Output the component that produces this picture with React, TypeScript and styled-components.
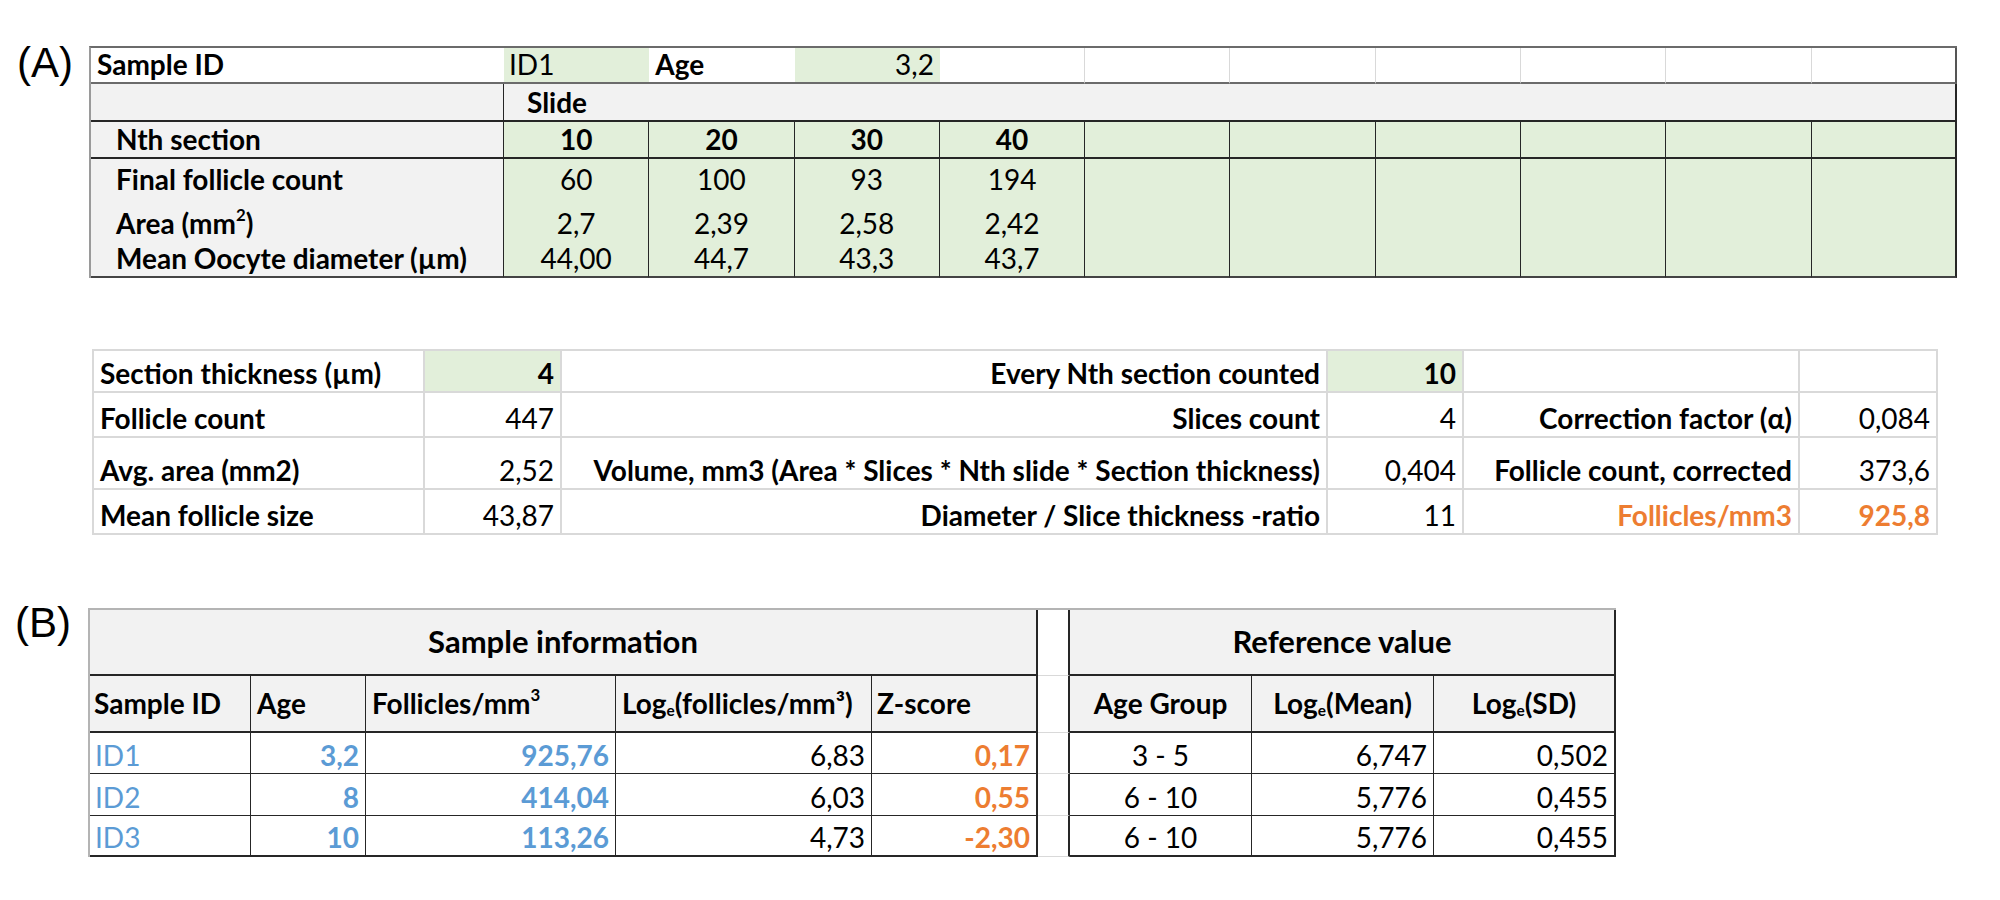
import React from "react";
import styled, { createGlobalStyle } from "styled-components";

const GREEN = "#e2efda";
const GREY = "#f2f2f2";
const BLUE = "#5b9bd5";
const ORANGE = "#ed7d31";
const DARK = "#262626";
const GRID = "#d9d9d9";

const GlobalStyle = createGlobalStyle`
  html, body {
    margin: 0;
    padding: 0;
    background: #fff;
  }
  body {
    font-family: Lato, "Liberation Sans", sans-serif;
    color: #000;
  }
`;

const Page = styled.div`
  width: 2000px;
  height: 900px;
  overflow: hidden;
  box-sizing: border-box;
  padding-top: 40px;
  display: flex;
  flex-direction: column;
`;

const Panel = styled.section<{ $top?: number }>`
  display: flex;
  align-items: flex-start;
  margin-top: ${(p) => p.$top ?? 0}px;
`;

const PanelLabel = styled.div<{ $left?: number }>`
  width: 88px;
  flex: none;
  box-sizing: border-box;
  padding-left: ${(p) => p.$left ?? 16}px;
  font-family: "Liberation Sans", Arial, sans-serif;
  font-size: 42px;
  line-height: 46px;
`;

const SheetA = styled.div`
  display: grid;
  grid-template-columns: 413px repeat(10, 145.3px);
  grid-template-rows: 36px 38px 37px 38px 44px 37px;
  margin: 6px 0 0 1px;
  border-top: 2px solid #6b6b6b;
  border-left: 2px solid #9a9a9a;
  font-size: 28px;
`;

const SheetSummary = styled.div`
  display: grid;
  grid-template-columns: 331px 137px 766px 136px 336px 138px;
  grid-template-rows: 42px 45px 52px 45px;
  margin: 71px 0 0 92px;
  border-top: 2px solid ${GRID};
  border-left: 2px solid ${GRID};
  font-size: 28px;
  align-self: flex-start;
`;

const SheetB = styled.div`
  display: grid;
  grid-template-columns: 161px 115px 250px 256px 166px 32px 182px 182px 182px;
  grid-template-rows: 66px 57px 41px 42px 41px;
  margin-top: 8px;
  border-top: 2px solid #b4b4b4;
  border-left: 2px solid #b4b4b4;
  font-size: 28px;
`;

type Align = "left" | "center" | "right";

const Cell = styled.div<{
  $bg?: string;
  $align?: Align;
  $bold?: boolean;
  $color?: string;
  $indent?: number;
  $right?: string;
  $bottom?: string;
  $span?: number;
  $middle?: boolean;
  $size?: number;
}>`
  box-sizing: border-box;
  display: flex;
  align-items: ${(p) => (p.$middle ? "center" : "flex-end")};
  justify-content: ${(p) =>
    p.$align === "right" ? "flex-end" : p.$align === "center" ? "center" : "flex-start"};
  padding: 0 6px 0 ${(p) => p.$indent ?? 6}px;
  background: ${(p) => p.$bg ?? "#fff"};
  color: ${(p) => p.$color ?? "#000"};
  font-weight: ${(p) => (p.$bold ? 700 : 400)};
  font-size: ${(p) => (p.$size ? `${p.$size}px` : "inherit")};
  border-right: ${(p) => p.$right ?? "none"};
  border-bottom: ${(p) => p.$bottom ?? "none"};
  grid-column: ${(p) => (p.$span ? `span ${p.$span}` : "auto")};
  white-space: nowrap;
  line-height: 1.2;
`;

const Sup = styled.sup`
  font-size: 0.6em;
  line-height: 0;
  vertical-align: 0.75em;
`;

const Sub = styled.sub`
  font-size: 0.55em;
  line-height: 0;
  vertical-align: -0.12em;
`;

const pad = (values: string[]) => [...values, ...Array(10 - values.length).fill("")];

const slideRows: { label: React.ReactNode; values: string[]; last?: boolean }[] = [
  { label: "Final follicle count", values: ["60", "100", "93", "194"] },
  {
    label: (
      <>
        Area (mm<Sup>2</Sup>)
      </>
    ),
    values: ["2,7", "2,39", "2,58", "2,42"],
  },
  { label: "Mean Oocyte diameter (µm)", values: ["44,00", "44,7", "43,3", "43,7"], last: true },
];

type SummaryCell = { t: string; label?: boolean; bold?: boolean; fill?: boolean; orange?: boolean };

const summaryRows: SummaryCell[][] = [
  [
    { t: "Section thickness (µm)", label: true },
    { t: "4", bold: true, fill: true },
    { t: "Every Nth section counted", label: true },
    { t: "10", bold: true, fill: true },
    { t: "" },
    { t: "" },
  ],
  [
    { t: "Follicle count", label: true },
    { t: "447" },
    { t: "Slices count", label: true },
    { t: "4" },
    { t: "Correction factor (α)", label: true },
    { t: "0,084" },
  ],
  [
    { t: "Avg. area (mm2)", label: true },
    { t: "2,52" },
    { t: "Volume, mm3 (Area * Slices * Nth slide * Section thickness)", label: true },
    { t: "0,404" },
    { t: "Follicle count, corrected", label: true },
    { t: "373,6" },
  ],
  [
    { t: "Mean follicle size", label: true },
    { t: "43,87" },
    { t: "Diameter / Slice thickness -ratio", label: true },
    { t: "11" },
    { t: "Follicles/mm3", label: true, orange: true },
    { t: "925,8", bold: true, orange: true },
  ],
];

const samples = [
  { id: "ID1", age: "3,2", density: "925,76", log: "6,83", z: "0,17", group: "3 - 5", mean: "6,747", sd: "0,502" },
  { id: "ID2", age: "8", density: "414,04", log: "6,03", z: "0,55", group: "6 - 10", mean: "5,776", sd: "0,455" },
  { id: "ID3", age: "10", density: "113,26", log: "4,73", z: "-2,30", group: "6 - 10", mean: "5,776", sd: "0,455" },
];

const thick = `2px solid ${DARK}`;
const thin = `1px solid ${DARK}`;
const grid = `1px solid ${GRID}`;
const topRule = "2px solid #6b6b6b";

export default function App() {
  return (
    <Page>
      <GlobalStyle />

      <Panel>
        <PanelLabel $left={17}>(A)</PanelLabel>
        <SheetA>
          <Cell $bold $bottom={topRule}>
            Sample ID
          </Cell>
          <Cell $bg={GREEN} $indent={5} $bottom={topRule}>
            ID1
          </Cell>
          <Cell $bold $bottom={topRule}>
            Age
          </Cell>
          <Cell $bg={GREEN} $align="right" $bottom={topRule}>
            3,2
          </Cell>
          {Array.from({ length: 7 }, (_, i) => (
            <Cell key={i} $bottom={topRule} $right={i === 6 ? "2px solid #555" : grid} />
          ))}

          <Cell $bg={GREY} $right={thin} $bottom={thick} />
          <Cell $bg={GREY} $bold $span={10} $indent={23} $right={thick} $bottom={thick}>
            Slide
          </Cell>

          <Cell $bg={GREY} $bold $indent={25} $right={thin} $bottom={thick}>
            Nth section
          </Cell>
          {pad(["10", "20", "30", "40"]).map((v, i) => (
            <Cell
              key={i}
              $bg={GREEN}
              $bold
              $align="center"
              $right={i === 9 ? thick : thin}
              $bottom={thick}
            >
              {v}
            </Cell>
          ))}

          {slideRows.map((row, r) => (
            <React.Fragment key={r}>
              <Cell
                $bg={GREY}
                $bold
                $indent={25}
                $right={thin}
                $bottom={row.last ? "2px solid #444" : undefined}
              >
                <span>{row.label}</span>
              </Cell>
              {pad(row.values).map((v, i) => (
                <Cell
                  key={i}
                  $bg={GREEN}
                  $align="center"
                  $right={i === 9 ? thick : thin}
                  $bottom={row.last ? "2px solid #444" : undefined}
                >
                  {v}
                </Cell>
              ))}
            </React.Fragment>
          ))}
        </SheetA>
      </Panel>

      <SheetSummary>
        {summaryRows.map((row, r) =>
          row.map((c, i) => (
            <Cell
              key={`${r}-${i}`}
              $align={i === 0 ? "left" : "right"}
              $bold={c.label || c.bold}
              $bg={c.fill ? GREEN : "#fff"}
              $color={c.orange ? ORANGE : "#000"}
              $right={`2px solid ${GRID}`}
              $bottom={`2px solid ${GRID}`}
            >
              {c.t}
            </Cell>
          ))
        )}
      </SheetSummary>

      <Panel $top={65}>
        <PanelLabel $left={15}>(B)</PanelLabel>
        <SheetB>
          <Cell $bg={GREY} $bold $span={5} $align="center" $middle $size={31} $right={thick} $bottom={thick}>
            Sample information
          </Cell>
          <Cell $right={thick} $bottom={grid} />
          <Cell $bg={GREY} $bold $span={3} $align="center" $middle $size={31} $right={thick} $bottom={thick}>
            Reference value
          </Cell>

          <Cell $bg={GREY} $bold $middle $indent={4} $right={thin} $bottom={thick}>
            Sample ID
          </Cell>
          <Cell $bg={GREY} $bold $middle $right={thin} $bottom={thick}>
            Age
          </Cell>
          <Cell $bg={GREY} $bold $middle $right={thin} $bottom={thick}>
            <span>
              Follicles/mm<Sup>3</Sup>
            </span>
          </Cell>
          <Cell $bg={GREY} $bold $middle $right={thin} $bottom={thick}>
            <span>
              Log<Sub>e</Sub>(follicles/mm³)
            </span>
          </Cell>
          <Cell $bg={GREY} $bold $middle $indent={5} $right={thick} $bottom={thick}>
            Z-score
          </Cell>
          <Cell $right={thick} $bottom={grid} />
          <Cell $bg={GREY} $bold $middle $align="center" $right={thin} $bottom={thick}>
            Age Group
          </Cell>
          <Cell $bg={GREY} $bold $middle $align="center" $right={thin} $bottom={thick}>
            <span>
              Log<Sub>e</Sub>(Mean)
            </span>
          </Cell>
          <Cell $bg={GREY} $bold $middle $align="center" $right={thick} $bottom={thick}>
            <span>
              Log<Sub>e</Sub>(SD)
            </span>
          </Cell>

          {samples.map((s, r) => {
            const bottom = r === samples.length - 1 ? thick : thin;
            return (
              <React.Fragment key={s.id}>
                <Cell $color={BLUE} $indent={5} $right={thin} $bottom={bottom}>
                  {s.id}
                </Cell>
                <Cell $color={BLUE} $bold $align="right" $right={thin} $bottom={bottom}>
                  {s.age}
                </Cell>
                <Cell $color={BLUE} $bold $align="right" $right={thin} $bottom={bottom}>
                  {s.density}
                </Cell>
                <Cell $align="right" $right={thin} $bottom={bottom}>
                  {s.log}
                </Cell>
                <Cell $color={ORANGE} $bold $align="right" $right={thick} $bottom={bottom}>
                  {s.z}
                </Cell>
                <Cell $right={thick} $bottom={grid} />
                <Cell $align="center" $right={thin} $bottom={bottom}>
                  {s.group}
                </Cell>
                <Cell $align="right" $right={thin} $bottom={bottom}>
                  {s.mean}
                </Cell>
                <Cell $align="right" $right={thick} $bottom={bottom}>
                  {s.sd}
                </Cell>
              </React.Fragment>
            );
          })}
        </SheetB>
      </Panel>
    </Page>
  );
}
